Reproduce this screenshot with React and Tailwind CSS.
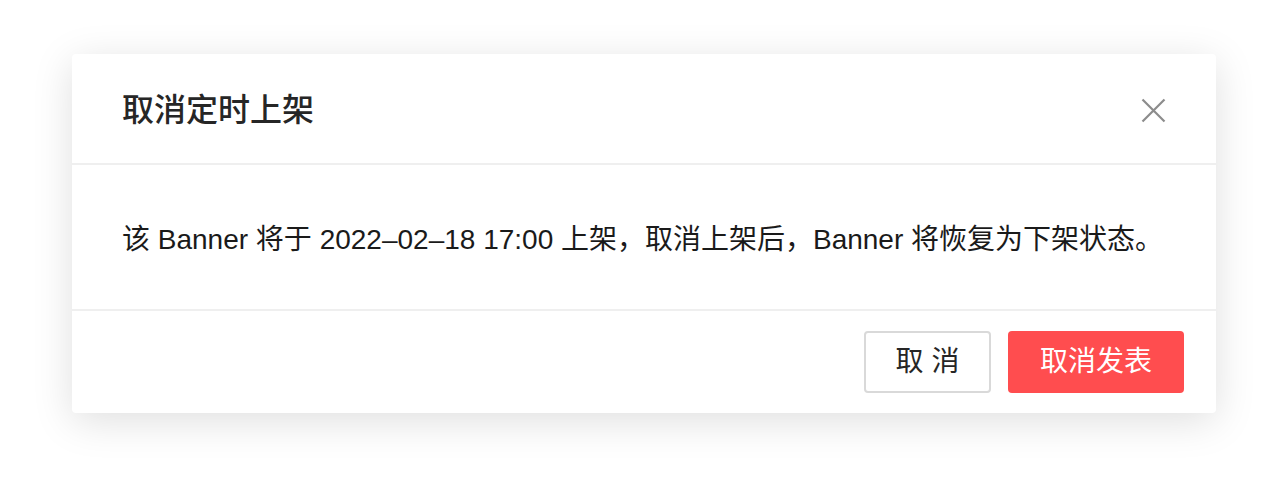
export default function App() {
  return (
    <div
      className="min-h-[504px] w-full bg-white px-[72px] pt-[54px]"
      style={{ fontFamily: '"Liberation Sans", "Noto Sans CJK SC", sans-serif' }}
    >
      <div className="w-[1144px] rounded-[4px] bg-white shadow-[0_8px_40px_rgba(0,0,0,0.13)]">
        <div className="flex h-[111px] items-center justify-between border-b-2 border-[#efefef] pl-[50px] pr-[50px] pt-[3px]">
          <h2 className="text-[32px] font-medium leading-none text-[#262626]">
            取消定时上架
          </h2>
          <button className="flex h-[26px] w-[26px] items-center justify-center">
            <svg width="25" height="25" viewBox="0 0 25 25" fill="none">
              <path
                d="M1.5 1.5L23.5 23.5M23.5 1.5L1.5 23.5"
                stroke="#8c8c8c"
                strokeWidth="2.2"
              />
            </svg>
          </button>
        </div>
        <div className="flex h-[146px] items-center border-b-2 border-[#efefef] px-[50px] pt-[5px]">
          <p className="text-[28px] leading-[42px] text-[#1a1a1a]">
            该 Banner 将于 2022–02–18 17:00 上架，取消上架后，Banner 将恢复为下架状态。
          </p>
        </div>
        <div className="flex h-[102px] items-center justify-end gap-[17px] pr-[32px]">
          <button className="h-[62px] w-[127px] rounded-[4px] border-2 border-[#d9d9d9] bg-white text-[28px] text-[#262626]">
            取 消
          </button>
          <button className="h-[62px] w-[176px] rounded-[4px] bg-[#ff4d4f] text-[28px] text-white">
            取消发表
          </button>
        </div>
      </div>
    </div>
  );
}
